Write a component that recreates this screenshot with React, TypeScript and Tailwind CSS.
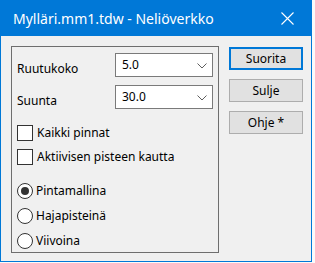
import { ReactNode } from "react";

const font = { fontFamily: '"Noto Sans", "Liberation Sans", sans-serif' };

function Combo({ value }: { value: string }) {
  return (
    <div className="flex h-[24px] w-[98px] items-center justify-between border border-[#7a7a7a] bg-white pl-[6px] pr-[5px] text-black">
      <span className="leading-none">{value}</span>
      <svg width="10" height="6" viewBox="0 0 10 6" className="mt-[1px]">
        <path d="M0.5 0.5 L5 5 L9.5 0.5" fill="none" stroke="#5f5f5f" strokeWidth="1" />
      </svg>
    </div>
  );
}

function Check({ label }: { label: string }) {
  return (
    <div className="flex h-[16px] items-center gap-[4px] leading-none">
      <span className="h-[16px] w-[16px] border border-[#333] bg-white" />
      <span>{label}</span>
    </div>
  );
}

function Radio({ label, checked }: { label: string; checked?: boolean }) {
  return (
    <div className="flex h-[16px] items-center gap-[3px] leading-none">
      <span className="flex h-[16px] w-[16px] items-center justify-center rounded-full border border-[#333] bg-white">
        {checked && <span className="h-[8px] w-[8px] rounded-full bg-[#333]" />}
      </span>
      <span>{label}</span>
    </div>
  );
}

function Btn({ children, primary }: { children: ReactNode; primary?: boolean }) {
  return (
    <div
      className={
        primary
          ? "flex h-[23px] w-[74px] items-center justify-center border-2 border-[#0078d7] bg-[#e1e1e1] leading-none"
          : "flex h-[23px] w-[74px] items-center justify-center border border-[#adadad] bg-[#e1e1e1] leading-none"
      }
    >
      {children}
    </div>
  );
}

export default function App() {
  return (
    <div className="h-[263px] w-[315px] bg-[#fafafa]" style={font}>
      <div className="flex h-[262px] w-[312px] flex-col border border-[#0078d7] bg-[#f0f0f0] text-[12px] text-black">
        <div className="flex h-[35px] shrink-0 items-center justify-between bg-[#0078d7] pl-[12px] pr-[17px] text-white">
          <span className="text-[14px] leading-none">Mylläri.mm1.tdw - Neliöverkko</span>
          <svg width="13" height="13" viewBox="0 0 13 13">
            <path d="M0.5 0.5 L12.5 12.5 M12.5 0.5 L0.5 12.5" stroke="white" strokeWidth="1.1" />
          </svg>
        </div>
        <div className="flex gap-[10px] pl-[10px] pt-[10px]">
          <div className="flex h-[207px] w-[208px] flex-col border border-[#6e6e6e] pl-[5px] pt-[6px]">
            <div className="flex h-[24px] items-center">
              <span className="w-[98px] pt-[8px] leading-none">Ruutukoko</span>
              <Combo value="5.0" />
            </div>
            <div className="mt-[8px] flex h-[24px] items-center">
              <span className="w-[98px] pt-[8px] leading-none">Suunta</span>
              <Combo value="30.0" />
            </div>
            <div className="mt-[16px] flex flex-col gap-[8px]">
              <Check label="Kaikki pinnat" />
              <Check label="Aktiivisen pisteen kautta" />
            </div>
            <div className="mt-[18px] flex flex-col gap-[9px]">
              <Radio label="Pintamallina" checked />
              <Radio label="Hajapisteinä" />
              <Radio label="Viivoina" />
            </div>
          </div>
          <div className="flex flex-col gap-[9px] pt-[1px]">
            <Btn primary>Suorita</Btn>
            <Btn>Sulje</Btn>
            <Btn>Ohje *</Btn>
          </div>
        </div>
      </div>
    </div>
  );
}
